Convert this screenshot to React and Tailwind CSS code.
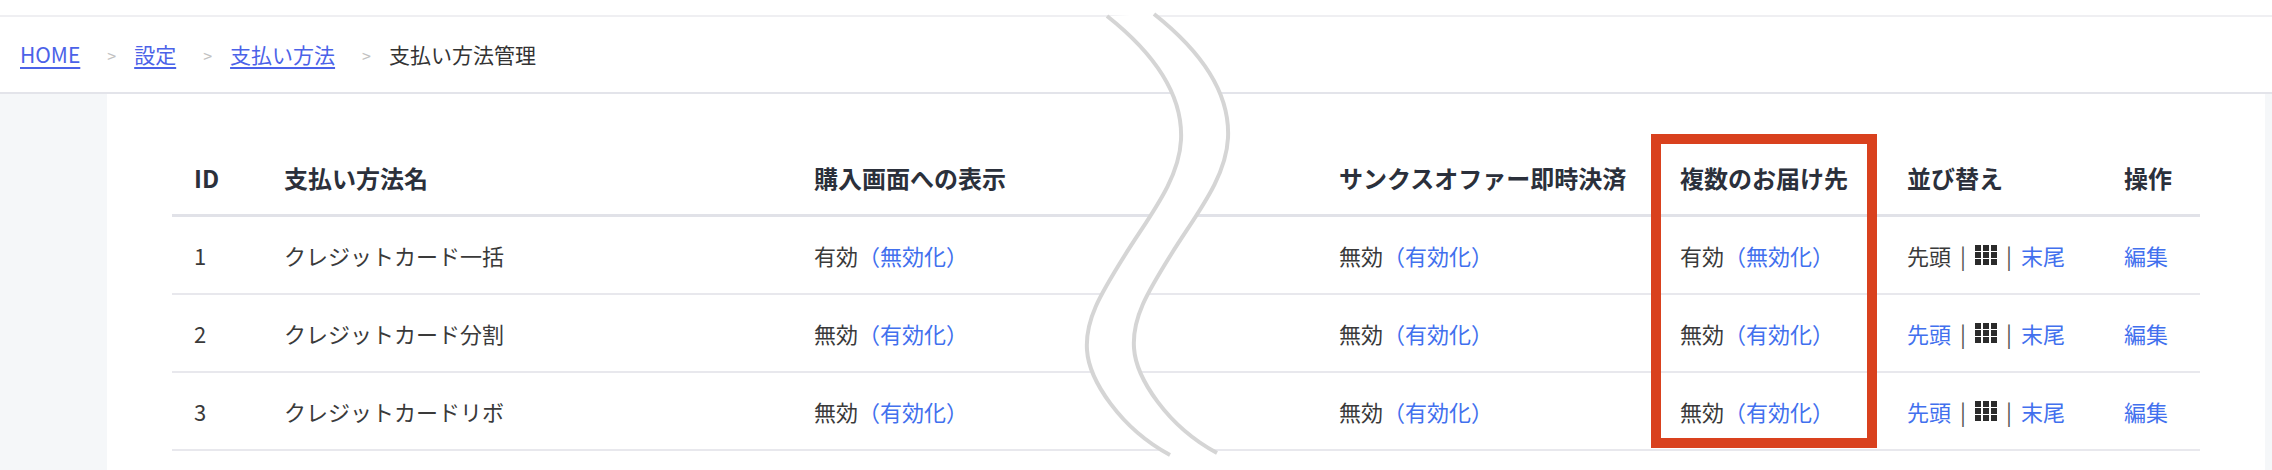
import React from 'react';

const rows = [
  { id: 1, name: 'クレジットカード一括', display: true, thanks: false, multi: true, first: false },
  { id: 2, name: 'クレジットカード分割', display: false, thanks: false, multi: false, first: true },
  { id: 3, name: 'クレジットカードリボ', display: false, thanks: false, multi: false, first: true },
];

const cols = 'grid grid-cols-[90px_530px_525px_341px_227px_217px_98px]';

const Toggle = ({ on }) => (
  <span>
    {on ? '有効' : '無効'}
    <a href="#" className="text-[#4270ee]">{on ? '（無効化）' : '（有効化）'}</a>
  </span>
);

const GridIcon = () => (
  <svg width="22" height="20" viewBox="0 0 22 20" className="shrink-0">
    {[0, 8, 16].map((x) =>
      [0, 7, 14].map((y) => <rect key={`${x}-${y}`} x={x} y={y} width="6" height="6" fill="#2b2b2b" />)
    )}
  </svg>
);

const Sep = () => <span className="text-[16px] text-[#c2c2c2] ml-[27px] mr-[18px]">&gt;</span>;

const Wave = () => (
  <svg className="absolute left-0 top-0 pointer-events-none" width="2272" height="470" viewBox="0 0 2272 470">
    <path
      d="M1107 16 C1160 58 1183 100 1181 140 C1179 180 1150 215 1125 255 C1100 295 1085 320 1087 350 C1089 380 1120 428 1170 455 L1217 453 C1167 426 1136 378 1134 348 C1132 318 1147 293 1172 253 C1197 213 1226 178 1228 138 C1230 98 1207 56 1154 14 Z"
      fill="#ffffff"
    />
    <path
      d="M1107 16 C1160 58 1183 100 1181 140 C1179 180 1150 215 1125 255 C1100 295 1085 320 1087 350 C1089 380 1120 428 1170 455"
      fill="none"
      stroke="#d5d5d5"
      strokeWidth="4"
    />
    <path
      d="M1154 14 C1207 56 1230 98 1228 138 C1226 178 1197 213 1172 253 C1147 293 1132 318 1134 348 C1136 378 1167 426 1217 453"
      fill="none"
      stroke="#d5d5d5"
      strokeWidth="4"
    />
  </svg>
);

export default function App() {
  return (
    <div className="relative w-[2272px] h-[470px] overflow-hidden bg-white font-['Noto_Sans_CJK_JP',sans-serif] text-[#3a3a3a]">
      {/* top bar */}
      <div className="h-[17px] border-b-2 border-[#efeff2]" />

      {/* breadcrumb */}
      <div className="h-[77px] flex items-center pl-[20px] text-[21px] border-b-2 border-[#e3e4ea]">
        <a href="#" className="text-[#4b62e8] underline underline-offset-4">HOME</a>
        <Sep />
        <a href="#" className="text-[#4b62e8] underline underline-offset-4">設定</a>
        <Sep />
        <a href="#" className="text-[#4b62e8] underline underline-offset-4">支払い方法</a>
        <Sep />
        <span className="text-[#333]">支払い方法管理</span>
      </div>

      <div className="flex h-[376px]">
        <div className="w-[107px] bg-[#f5f7f9]" />
        <div className="flex-1 px-[65px] pt-[48px]">
          {/* header */}
          <div className={`${cols} h-[75px] items-center border-b-[3px] border-[#e1e2e8] text-[24px] font-bold text-[#2b303b]`}>
            <div className="pl-[22px]">ID</div>
            <div className="pl-[22px]">支払い方法名</div>
            <div className="pl-[22px]">購入画面への表示</div>
            <div className="pl-[22px]">サンクスオファー即時決済</div>
            <div className="pl-[22px]">複数のお届け先</div>
            <div className="pl-[22px]">並び替え</div>
            <div className="pl-[22px]">操作</div>
          </div>

          {rows.map((r) => (
            <div key={r.id} className={`${cols} h-[78px] items-center border-b-2 border-[#e8e8ed] text-[22px]`}>
              <div className="pl-[22px]">{r.id}</div>
              <div className="pl-[22px]">{r.name}</div>
              <div className="pl-[22px]"><Toggle on={r.display} /></div>
              <div className="pl-[22px]"><Toggle on={r.thanks} /></div>
              <div className="pl-[22px]"><Toggle on={r.multi} /></div>
              <div className="pl-[22px] flex items-center gap-[9px]">
                {r.first ? <a href="#" className="text-[#4270ee]">先頭</a> : <span>先頭</span>}
                <span className="text-[#555]">|</span>
                <GridIcon />
                <span className="text-[#555]">|</span>
                <a href="#" className="text-[#4270ee]">末尾</a>
              </div>
              <div className="pl-[22px]">
                <a href="#" className="text-[#4270ee]">編集</a>
              </div>
            </div>
          ))}
        </div>
        <div className="w-[7px] bg-[#f5f7f9]" />
      </div>

      <Wave />

      {/* highlight */}
      <div className="absolute left-[1651px] top-[134px] w-[226px] h-[314px] border-[10px] border-[#d9411e]" />
    </div>
  );
}
